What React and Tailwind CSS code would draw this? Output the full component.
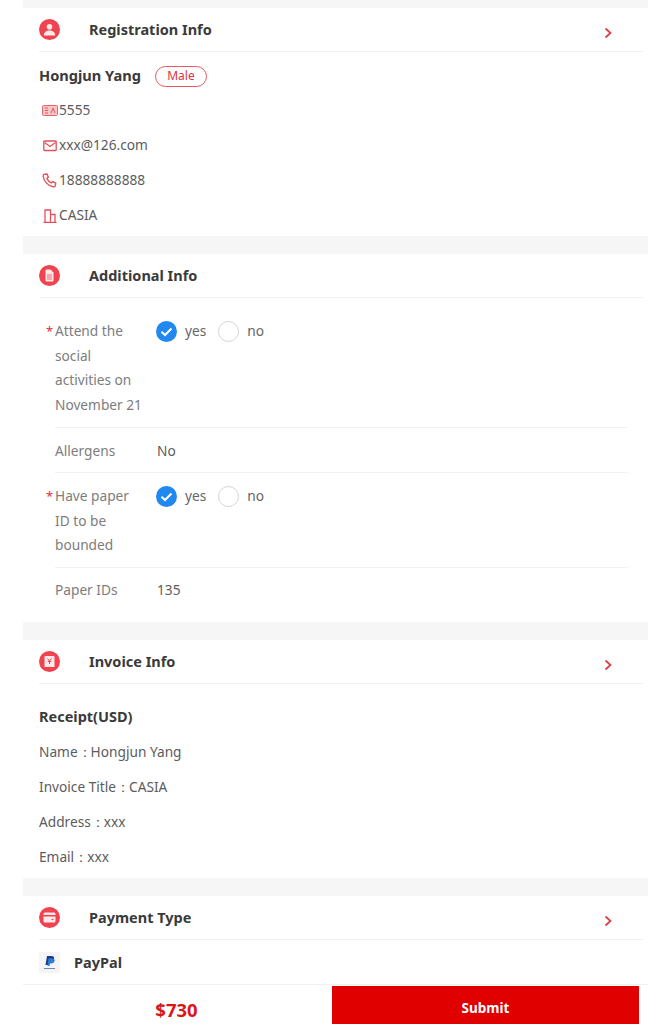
import { useState } from "react";

const Chevron = () => (
  <svg width="9" height="12" viewBox="0 0 9 12" fill="none" className="mt-[6px]">
    <path d="M1.5 1.5L6.5 6L1.5 10.5" stroke="#d9404f" strokeWidth="1.8" />
  </svg>
);

function HeadIcon({ children }) {
  return (
    <div className="flex h-[21px] w-[21px] items-center justify-center rounded-full bg-[#f0434f]">
      <svg width="13" height="13" viewBox="0 0 13 13" fill="#ffe9ea">
        {children}
      </svg>
    </div>
  );
}

function Header({ icon, title, arrow }) {
  return (
    <div className="ml-4 mr-[5px] flex h-[44px] items-center border-b border-[#f2f2f2] pr-[30px]">
      {icon}
      <span className="ml-[29px] flex-1 text-[14.5px] font-bold text-[#3a3a3a]">{title}</span>
      {arrow && <Chevron />}
    </div>
  );
}

function Section({ children }) {
  return <section className="bg-white">{children}</section>;
}

const Gap = () => <div className="h-[18px] bg-[#f6f6f6]" />;

function Contact({ icon, text }) {
  return (
    <div className="flex h-[35px] items-center text-[13.7px] text-[#5c5c5c]">
      <span className="flex w-[20px] justify-center pl-[1px]">{icon}</span>
      {text}
    </div>
  );
}

function Radio({ checked, label }) {
  return (
    <div className="flex items-center">
      {checked ? (
        <svg width="21" height="21" viewBox="0 0 21 21">
          <circle cx="10.5" cy="10.5" r="10.5" fill="#2188f0" />
          <path d="M5.5 10.8L9 14L15.5 7.5" fill="none" stroke="#fff" strokeWidth="2" />
        </svg>
      ) : (
        <div className="h-[21px] w-[21px] rounded-full border border-[#d4d4d4]" />
      )}
      <span className="ml-[8px] text-[13.7px] text-[#666]">{label}</span>
    </div>
  );
}

function YesNo() {
  const [value] = useState("yes");
  return (
    <div className="-ml-px flex items-center gap-[12px]">
      <Radio checked={value === "yes"} label="yes" />
      <Radio checked={value === "no"} label="no" />
    </div>
  );
}

function FormRow({ required, label, children, last, className }) {
  return (
    <div className={`flex leading-[24.5px] ${last ? "" : "border-b border-[#f2f2f2]"} ${className}`}>
      <div className="relative w-[102px] pr-[10px] text-[13.7px] text-[#7d7d7d]">
        {required && (
          <span className="absolute -left-[9px] top-0 text-[13px] text-[#e0303c]">*</span>
        )}
        {label}
      </div>
      <div className="text-[13.7px] text-[#5c5c5c]">{children}</div>
    </div>
  );
}

function InvoiceLine({ label, value }) {
  return (
    <div className="flex h-[35px] items-center text-[13.7px] text-[#5c5c5c]">
      {label}：<span className="ml-[-1px]">{value}</span>
    </div>
  );
}

export default function App() {
  return (
    <div className="relative h-[1024px] overflow-hidden bg-white pl-[23px] font-['Noto_Sans','Open_Sans',sans-serif]">
      <div className="h-2 bg-[#f6f6f6]" />
      <Section>
        <Header
          title="Registration Info"
          arrow
          icon={
            <HeadIcon>
              <circle cx="6.5" cy="3.8" r="2.8" />
              <path d="M0.8 12.5c0-3.2 2.5-5 5.7-5s5.700 1.800 5.700 5z" />
            </HeadIcon>
          }
        />
        <div className="h-[184px] px-4">
          <div className="flex h-[48px] items-center">
            <span className="text-[14.6px] font-bold text-[#3a3a3a]">Hongjun Yang</span>
            <span className="ml-[14px] flex h-[21px] w-[52px] items-center justify-center rounded-full border border-[#e8565f] text-[12px] text-[#e0323c]">
              Male
            </span>
          </div>
          <div className="-mt-[7px]">
            <Contact
              text="5555"
              icon={
                <svg width="16" height="11" viewBox="0 0 16 11">
                  <rect x="0.5" y="0.5" width="15" height="10" rx="1" fill="#f6c5c8" stroke="#e8656e" />
                  <path d="M3 3h3M3 5.500h3M3 8h3M9 8l2-5 2 5" fill="none" stroke="#e8565f" />
                </svg>
              }
            />
            <Contact
              text="xxx@126.com"
              icon={
                <svg width="14" height="12" viewBox="0 0 14 12" fill="none" stroke="#e2515b" strokeWidth="1.300">
                  <rect x="0.800" y="1" width="12.400" height="9.500" rx="0.800" />
                  <path d="M1.500 2.500L7 6.500L12.500 2.500" />
                </svg>
              }
            />
            <Contact
              text="18888888888"
              icon={
                <svg width="15" height="15" viewBox="0 0 15 15" fill="none" stroke="#e2515b" strokeWidth="1.400">
                  <path d="M2.500 1.200L5 1l1.300 3L5 5.500c.7 1.800 2.300 3.500 4.200 4.400l1.500-1.300 3 1.600-.4 2.500c-.3.9-1.300 1.300-2.300 1.100C6 12.700 2 8.500 1.200 3.500c-.1-1 .4-2 1.300-2.300z" />
                </svg>
              }
            />
            <Contact
              text="CASIA"
              icon={
                <svg width="14" height="14" viewBox="0 0 14 14" fill="none" stroke="#e2515b" strokeWidth="1.300">
                  <path d="M0.500 13.300h13M2 13.300V1h5.500v12.300M7.500 5.500h4.500v7.800" />
                </svg>
              }
            />
          </div>
        </div>
      </Section>
      <Gap />
      <Section>
        <Header
          title="Additional Info"
          icon={
            <HeadIcon>
              <path d="M2.500 1.500a1 1 0 0 1 1-1h4l3 3v8a1 1 0 0 1-1 1h-6a1 1 0 0 1-1-1z" />
              <path d="M4 6h5M4 8h5M4 10h5" stroke="#f0434f" strokeWidth="0.800" />
            </HeadIcon>
          }
        />
        <div className="h-[324px] pl-8 pr-5 pt-[21px]">
          <FormRow required label="Attend the social activities on November 21" className="h-[109px]">
            <YesNo />
          </FormRow>
          <FormRow label="Allergens" className="h-[45px] pt-[11px]">
            No
          </FormRow>
          <FormRow required label="Have paper ID to be bounded" className="h-[95px] pt-[11px]">
            <YesNo />
          </FormRow>
          <FormRow last label="Paper IDs" className="pt-[10px]">
            135
          </FormRow>
        </div>
      </Section>
      <Gap />
      <Section>
        <Header
          title="Invoice Info"
          arrow
          icon={
            <HeadIcon>
              <path d="M1.500 2a1 1 0 0 1 1-1h8a1 1 0 0 1 1 1v10H1.500z" />
              <path d="M4.500 3.500L6.500 6l2-2.500M6.500 6v3M4.800 6.500h3.400" fill="none" stroke="#f0434f" strokeWidth="1" />
            </HeadIcon>
          }
        />
        <div className="h-[194px] px-4 pt-[15px]">
          <div className="flex h-[36px] items-center text-[14.5px] font-bold text-[#3a3a3a]">Receipt(USD)</div>
          <InvoiceLine label="Name" value="Hongjun Yang" />
          <InvoiceLine label="Invoice Title" value="CASIA" />
          <InvoiceLine label="Address" value="xxx" />
          <InvoiceLine label="Email" value="xxx" />
        </div>
      </Section>
      <Gap />
      <Section>
        <Header
          title="Payment Type"
          arrow
          icon={
            <HeadIcon>
              <path d="M0.500 3a1.500 1.500 0 0 1 1.500-1.500h9a1.500 1.500 0 0 1 1.500 1.500v1h-12zM0.500 5.500h12V10a1.500 1.500 0 0 1-1.500 1.500H2A1.500 1.500 0 0 1 .5 10z" />
              <path d="M8.500 8.500h2" stroke="#f0434f" strokeWidth="1" />
            </HeadIcon>
          }
        />
        <div className="flex h-[45px] items-center border-b border-[#f2f2f2] pl-4">
          <div className="flex h-[21px] w-[21px] flex-col items-center justify-center bg-[#f5f5f7]">
            <svg width="10" height="12" viewBox="0 0 10 12">
              <path d="M2 0h4.500C8.500 0 9.500 1.200 9 3c-.5 2-2 3-4 3H3.500L2.800 9H0.500z" fill="#1a3a8f" />
              <path d="M3.500 2.500h4.500C9.500 3 10 4 9.500 5.300 9 7 7.800 7.500 6 7.500H5L4.500 10H2.500z" fill="#2b7fd4" />
            </svg>
            <span className="h-[1px] w-[11px] bg-[#6d86bd]" />
          </div>
          <span className="ml-[14px] pt-[1px] text-[14.5px] font-bold text-[#3a3a3a]">PayPal</span>
        </div>
      </Section>
      <div className="flex h-[40px] items-end pr-[9px]">
        <div className="flex h-[38px] w-[309px] items-center justify-center pt-[8px] pr-[2px] text-[18.5px] font-bold text-[#d81818]">
          $730
        </div>
        <button className="h-[39px] flex-1 bg-[#e00000] pt-[5px] text-[13.5px] font-bold text-white">Submit</button>
      </div>
    </div>
  );
}
